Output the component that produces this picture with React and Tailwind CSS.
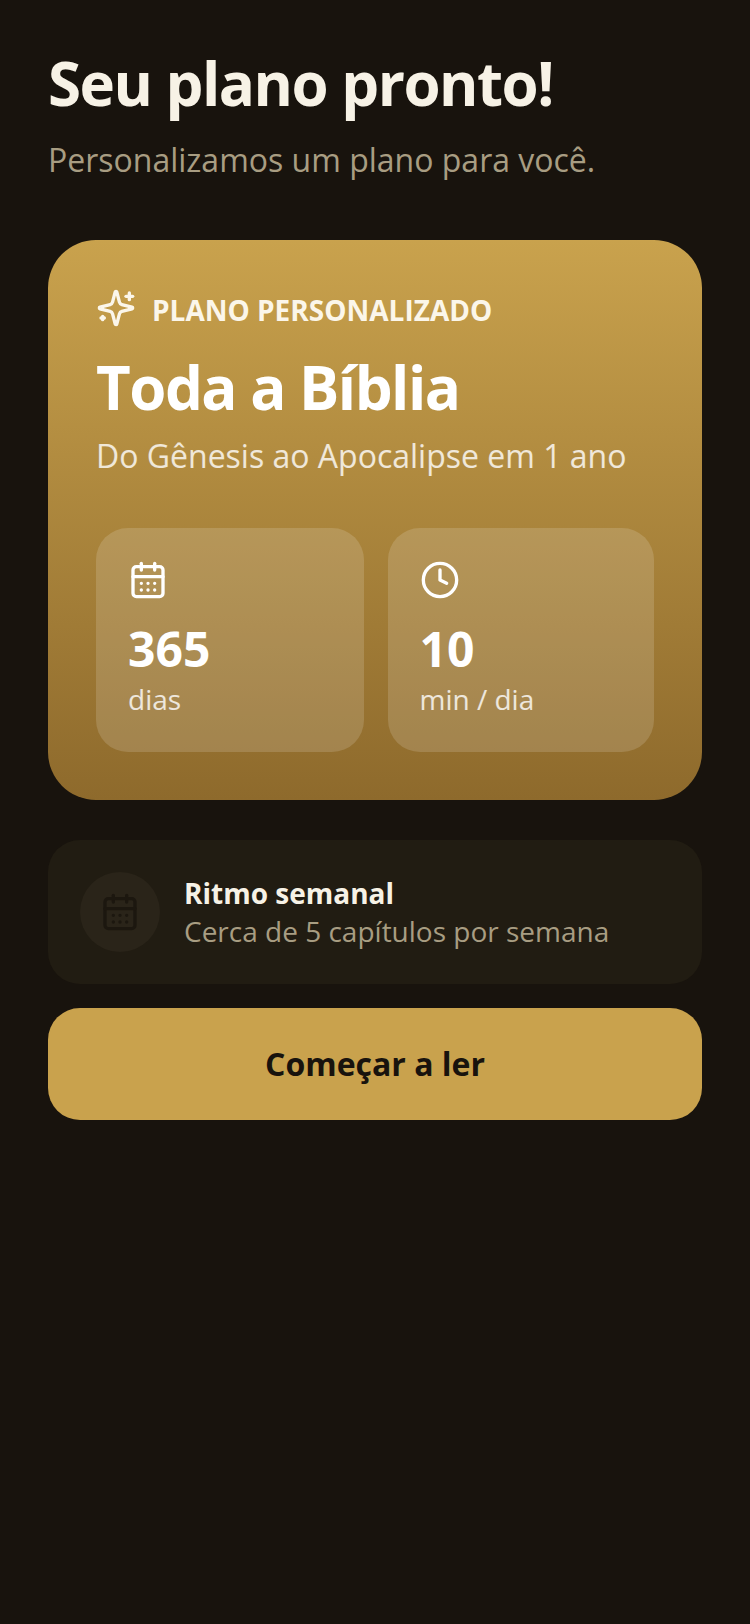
import { Clock } from "lucide-react";

function CalendarGlyph({ className }) {
  return (
    <svg viewBox="0 0 24 24" fill="none" stroke="currentColor" strokeWidth="2" strokeLinecap="round" strokeLinejoin="round" className={className}>
      <path d="M8 2v4" />
      <path d="M16 2v4" />
      <rect x="3" y="4" width="18" height="18" rx="2" />
      <path d="M3 10h18" />
      <path d="M8 14h.01M12 14h.01M16 14h.01M8 18h.01M12 18h.01M16 18h.01" />
    </svg>
  );
}

function SparkGlyph({ className }) {
  return (
    <svg viewBox="0 0 24 24" fill="none" stroke="currentColor" strokeWidth="2" strokeLinecap="round" strokeLinejoin="round" className={className}>
      <path d="M9.937 15.5A2 2 0 0 0 8.5 14.063l-6.135-1.582a.5.5 0 0 1 0-.962L8.5 9.936A2 2 0 0 0 9.937 8.5l1.582-6.135a.5.5 0 0 1 .963 0L14.063 8.5A2 2 0 0 0 15.5 9.937l6.135 1.581a.5.5 0 0 1 0 .964L15.5 14.063a2 2 0 0 0-1.437 1.437l-1.582 6.135a.5.5 0 0 1-.963 0z" />
      <path d="M20 3v4" />
      <path d="M22 5h-4" />
      <path d="M4 17v2" />
      <path d="M5 18H3" />
    </svg>
  );
}

function StatCard({ icon, value, label, className }) {
  return (
    <div className={`h-[224px] rounded-[32px] bg-white/15 px-[32px] pt-[32px] ${className}`}>
      {icon}
      <div className="mt-[17px] text-[48px] leading-[64px] font-bold text-white">{value}</div>
      <div className="mt-[-2px] text-[28px] leading-[40px] text-white/80">{label}</div>
    </div>
  );
}

export default function App() {
  return (
    <div className="min-h-[1624px] bg-[#18130d] px-[48px] pt-[38px] font-['Open_Sans',sans-serif]">
      <h1 className="text-[60px] leading-[90px] font-bold tracking-[-1.5px] text-[#f7f2e6]">Seu plano pronto!</h1>
      <p className="mt-[8px] text-[32px] leading-[48px] text-[#a89d82]">Personalizamos um plano para você.</p>

      <div className="mt-[56px] h-[560px] rounded-[48px] bg-gradient-to-b from-[#c9a24d] to-[#8e6a2c] p-[48px]">
        <div className="flex items-start gap-[16px]">
          <SparkGlyph className="w-[40px] h-[40px] text-[#fbf6ea]" />
          <span className="mt-[2px] text-[28px] leading-[40px] font-bold text-[#fbf6ea]">PLANO PERSONALIZADO</span>
        </div>
        <h2 className="mt-[17px] text-[60px] leading-[80px] font-bold tracking-[-1.5px] text-white">Toda a Bíblia</h2>
        <p className="mt-[5px] text-[32px] leading-[48px] text-white/80">Do Gênesis ao Apocalipse em 1 ano</p>
        <div className="mt-[48px] flex gap-[24px]">
          <StatCard className="w-[267.5px]" icon={<CalendarGlyph className="w-[40px] h-[40px] text-white" />} value="365" label="dias" />
          <StatCard className="flex-1" icon={<Clock className="w-[40px] h-[40px] text-white" />} value="10" label="min / dia" />
        </div>
      </div>

      <div className="mt-[40px] h-[144px] rounded-[32px] bg-[#211c12] flex items-center gap-[24px] px-[32px]">
        <div className="w-[80px] h-[80px] rounded-full bg-[#2a2419] flex items-center justify-center">
          <CalendarGlyph className="w-[40px] h-[40px] text-[#1c170f]" />
        </div>
        <div>
          <div className="text-[28px] leading-[38px] font-bold text-[#f7f2e6]">Ritmo semanal</div>
          <div className="text-[28px] leading-[38px] text-[#a89d82]">Cerca de 5 capítulos por semana</div>
        </div>
      </div>

      <button className="mt-[24px] w-full h-[112px] rounded-[32px] bg-[#c9a24d] text-[32px] font-bold text-[#18130d]">
        Começar a ler
      </button>
    </div>
  );
}
